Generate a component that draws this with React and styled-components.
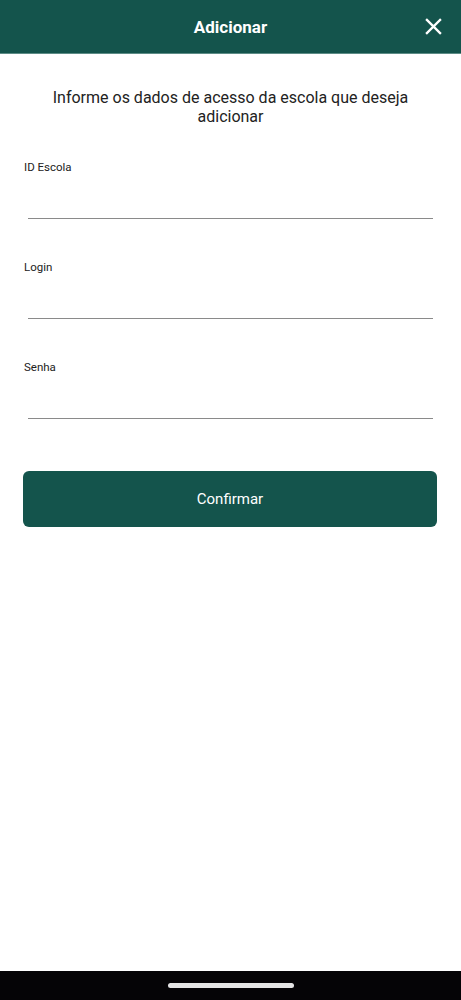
import React from "react";
import styled, { createGlobalStyle } from "styled-components";

const GlobalStyle = createGlobalStyle`
  html, body {
    margin: 0;
    padding: 0;
    background: #fff;
    font-family: Roboto, "Liberation Sans", sans-serif;
  }
`;

const Page = styled.div`
  min-height: 1000px;
  display: flex;
  flex-direction: column;
`;

const Header = styled.header`
  height: 53px;
  background: #14544c;
  border-bottom: 1px solid #5d8c86;
  display: flex;
  align-items: center;
  justify-content: center;
  position: relative;
  color: #fff;
`;

const Title = styled.h1`
  margin: 0;
  font-size: 17px;
  font-weight: 700;
`;

const CloseButton = styled.button`
  position: absolute;
  right: 14px;
  top: 50%;
  transform: translateY(-50%);
  width: 28px;
  height: 28px;
  padding: 0;
  border: none;
  background: transparent;
  display: flex;
  align-items: center;
  justify-content: center;
  cursor: pointer;
`;

const Content = styled.main`
  flex: 1;
  display: flex;
  flex-direction: column;
  padding: 34px 0 0;
`;

const Intro = styled.p`
  margin: 0 40px 34px;
  font-size: 16px;
  line-height: 19px;
  color: #222;
  text-align: center;
`;

const Field = styled.div`
  display: flex;
  flex-direction: column;
  padding: 0 28px 0 24px;
  margin-bottom: 41px;
`;

const Label = styled.label`
  font-size: 11.5px;
  line-height: 14px;
  color: #222;
`;

const Input = styled.input`
  margin-left: 4px;
  height: 44px;
  border: none;
  border-bottom: 1.5px solid #8a8a8a;
  outline: none;
  background: transparent;
  font-family: inherit;
  font-size: 16px;
  padding: 0;
`;

const ConfirmButton = styled.button`
  margin: 11px 24px 0 23px;
  height: 56px;
  border: none;
  border-radius: 6px;
  background: #14544c;
  color: #fff;
  font-family: inherit;
  font-size: 15px;
  cursor: pointer;
`;

const NavBar = styled.div`
  height: 29px;
  background: #050406;
  display: flex;
  align-items: center;
  justify-content: center;
`;

const Handle = styled.div`
  width: 126px;
  height: 5px;
  border-radius: 3px;
  background: #e4e4e4;
`;

const fields = [
  { id: "escola", label: "ID Escola", type: "text" },
  { id: "login", label: "Login", type: "text" },
  { id: "senha", label: "Senha", type: "password" },
];

export default function App() {
  return (
    <>
      <GlobalStyle />
      <Page>
        <Header>
          <Title>Adicionar</Title>
          <CloseButton aria-label="Fechar">
            <svg width="17" height="17" viewBox="0 0 18 18">
              <path
                d="M2 2 L16 16 M16 2 L2 16"
                stroke="#fff"
                strokeWidth="2.4"
                strokeLinecap="square"
              />
            </svg>
          </CloseButton>
        </Header>
        <Content>
          <Intro>Informe os dados de acesso da escola que deseja adicionar</Intro>
          {fields.map((f) => (
            <Field key={f.id}>
              <Label htmlFor={f.id}>{f.label}</Label>
              <Input id={f.id} type={f.type} />
            </Field>
          ))}
          <ConfirmButton>Confirmar</ConfirmButton>
        </Content>
        <NavBar>
          <Handle />
        </NavBar>
      </Page>
    </>
  );
}
